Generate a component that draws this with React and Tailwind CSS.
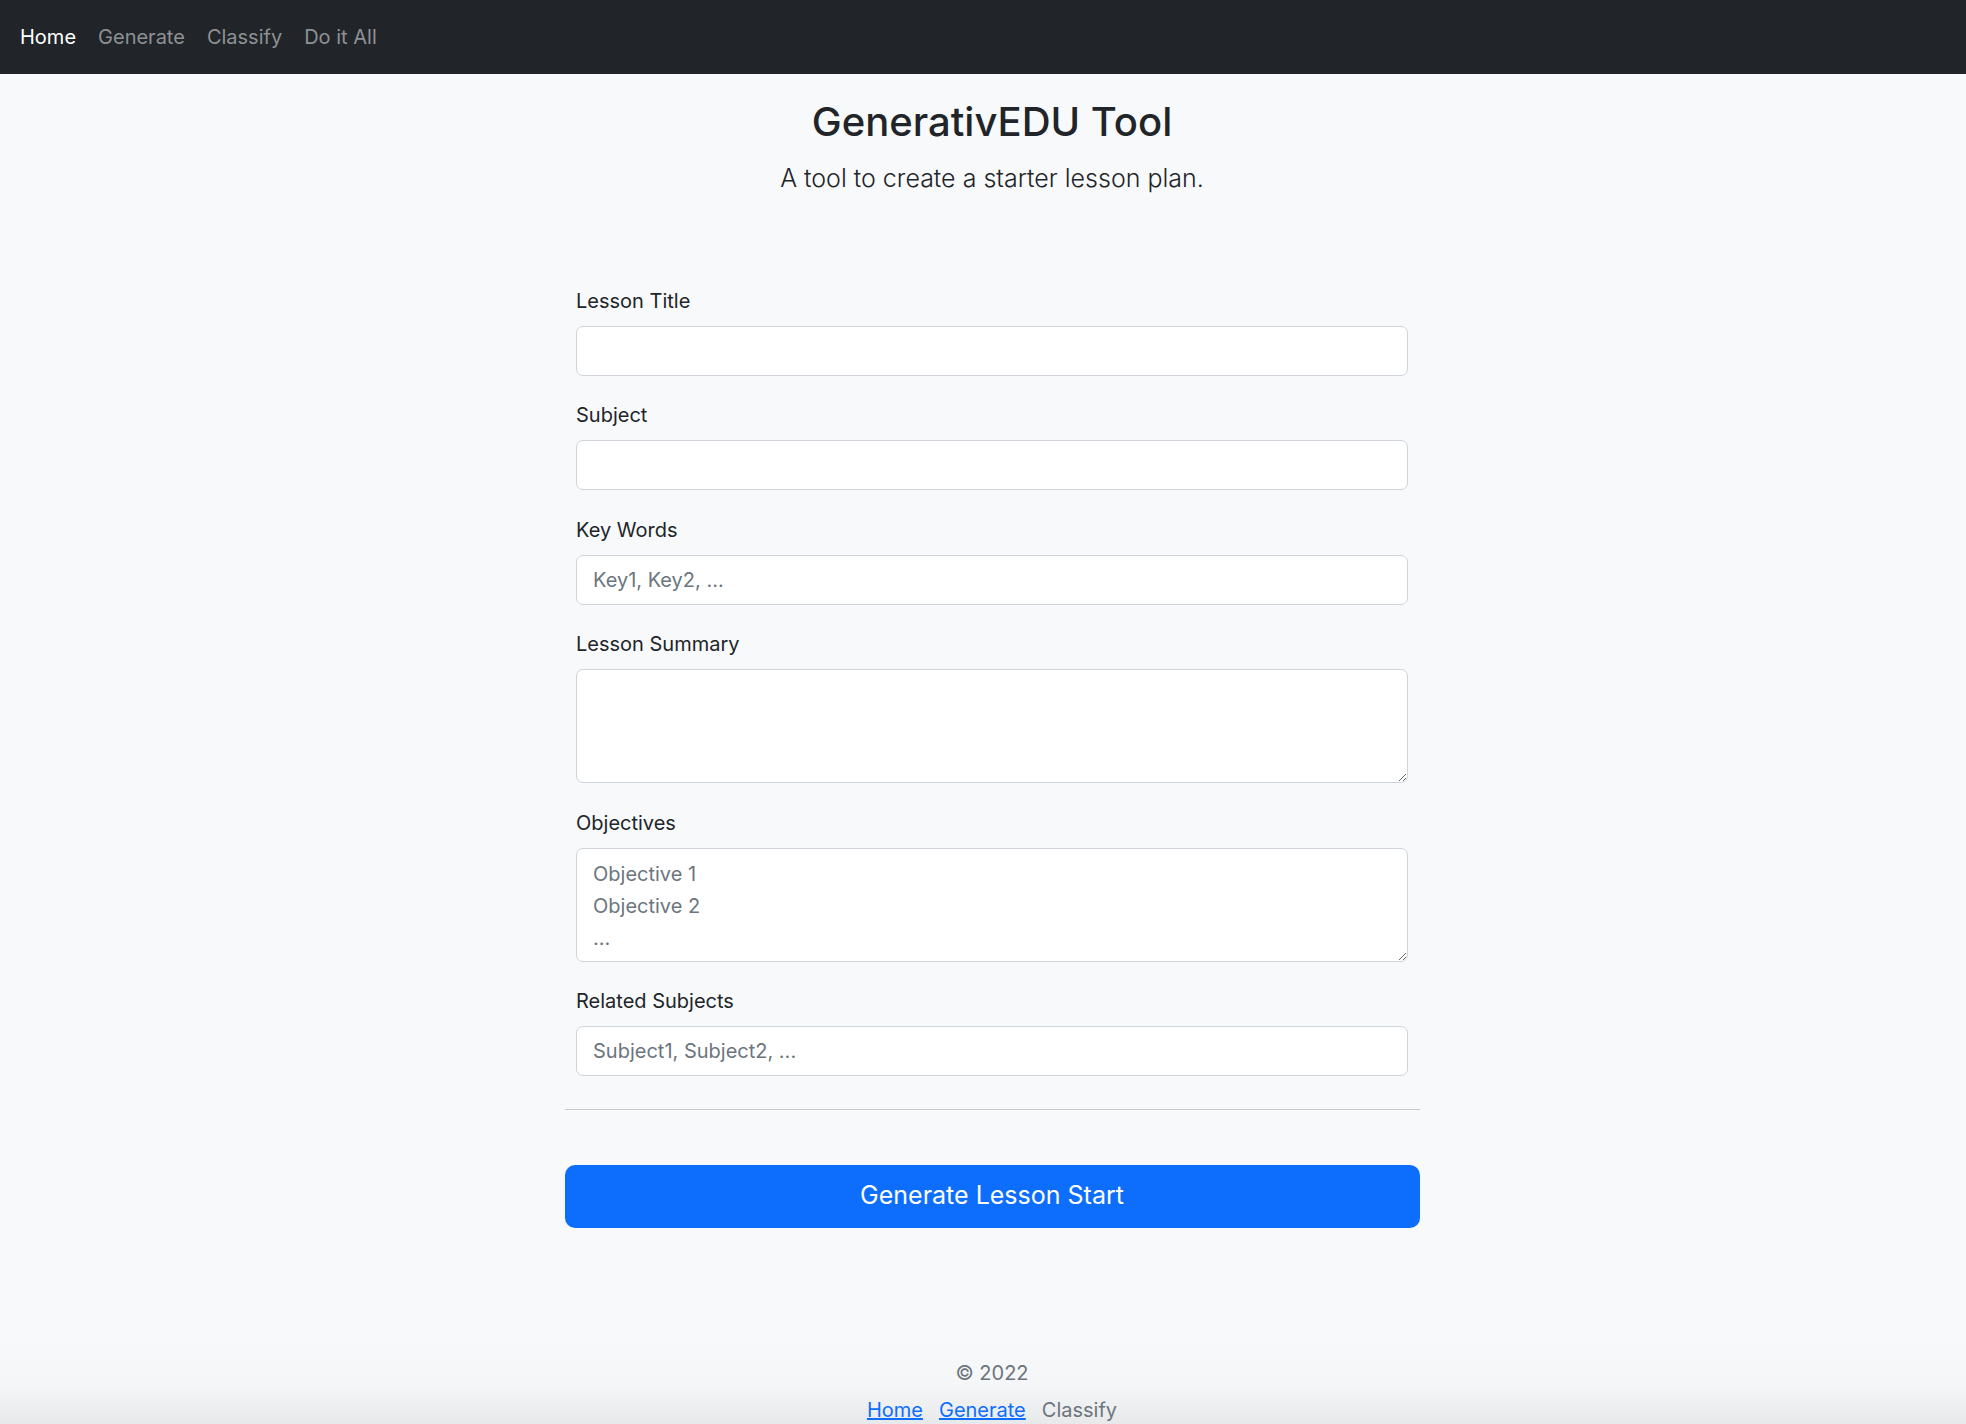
import { useState } from "react";

const links = ["Home", "Generate", "Classify", "Do it All"];

function Field({ label, children }) {
  return (
    <div className="mb-[24.5px] flex flex-col">
      <label className="mb-[10px] text-[20px] leading-[30px] text-[#212529]">{label}</label>
      {children}
    </div>
  );
}

export default function App() {
  const [form, setForm] = useState({
    title: "",
    subject: "",
    keywords: "",
    summary: "",
    objectives: "",
    related: "",
  });

  const inputCls =
    "h-[50px] w-full rounded-[7px] border border-[#ced4da] bg-white px-[16px] text-[20px] text-[#212529] outline-none placeholder:text-[#6c757d]";
  const areaCls =
    "h-[114px] w-full rounded-[7px] border border-[#ced4da] bg-white px-[16px] pt-[9px] text-[20px] leading-[32px] text-[#212529] outline-none placeholder:text-[#6c757d]";

  return (
    <div
      className="min-h-screen bg-[#f8f9fa]"
      style={{ fontFamily: "Inter, 'Noto Sans', 'Liberation Sans', sans-serif" }}
    >
      {/* navbar */}
      <nav className="flex h-[74px] items-center bg-[#212529] pl-[20px]">
        <ul className="flex gap-[22px] text-[20px] leading-[30px]">
          {links.map((l, i) => (
            <li key={l}>
              <a href="#" className={i === 0 ? "text-white" : "text-[#8e9194]"}>
                {l}
              </a>
            </li>
          ))}
        </ul>
      </nav>

      <div className="flex justify-center pl-[18px]">
        <div className="w-[855px]">
          <div className="pt-[24px] text-center">
            <h1 className="text-[40px] font-medium leading-[48px] text-[#212529]">
              GenerativEDU Tool
            </h1>
            <p className="mt-[14px] text-[25px] font-light leading-[37.5px] text-[#212529]">
              A tool to create a starter lesson plan.
            </p>
          </div>

          <form className="mt-[88px]" onSubmit={(e) => e.preventDefault()}>
            <div className="px-[11.5px]">
              <Field label="Lesson Title">
                <input
                  className={inputCls}
                  value={form.title}
                  onChange={(e) => setForm({ ...form, title: e.target.value })}
                />
              </Field>
              <Field label="Subject">
                <input
                  className={inputCls}
                  value={form.subject}
                  onChange={(e) => setForm({ ...form, subject: e.target.value })}
                />
              </Field>
              <Field label="Key Words">
                <input
                  className={inputCls}
                  placeholder="Key1, Key2, ..."
                  value={form.keywords}
                  onChange={(e) => setForm({ ...form, keywords: e.target.value })}
                />
              </Field>
              <Field label="Lesson Summary">
                <textarea
                  className={areaCls}
                  value={form.summary}
                  onChange={(e) => setForm({ ...form, summary: e.target.value })}
                />
              </Field>
              <Field label="Objectives">
                <textarea
                  className={areaCls}
                  placeholder={"Objective 1\nObjective 2\n..."}
                  value={form.objectives}
                  onChange={(e) => setForm({ ...form, objectives: e.target.value })}
                />
              </Field>
              <Field label="Related Subjects">
                <input
                  className={inputCls}
                  placeholder="Subject1, Subject2, ..."
                  value={form.related}
                  onChange={(e) => setForm({ ...form, related: e.target.value })}
                />
              </Field>
            </div>

            <hr className="mt-[32.5px] border-t border-[#c9cacc]" />

            <button
              type="submit"
              className="mt-[55px] h-[63px] w-full rounded-[10px] bg-[#0d6efd] text-[25px] text-white"
            >
              Generate Lesson Start
            </button>
          </form>
        </div>
      </div>

      {/* footer */}
      <footer className="mt-[112px] bg-gradient-to-b from-[#f8f9fa] via-[#f5f6f7] to-[#e6e7e9] pb-[4px] pl-[18px] pt-[18px] text-center text-[20px] leading-[30px] text-[#6c757d]">
        <p>© 2022</p>
        <div className="mt-[7px] flex justify-center gap-[16px]">
          <a href="#" className="text-[#0d6efd] underline">
            Home
          </a>
          <a href="#" className="text-[#0d6efd] underline">
            Generate
          </a>
          <span>Classify</span>
        </div>
      </footer>
    </div>
  );
}
